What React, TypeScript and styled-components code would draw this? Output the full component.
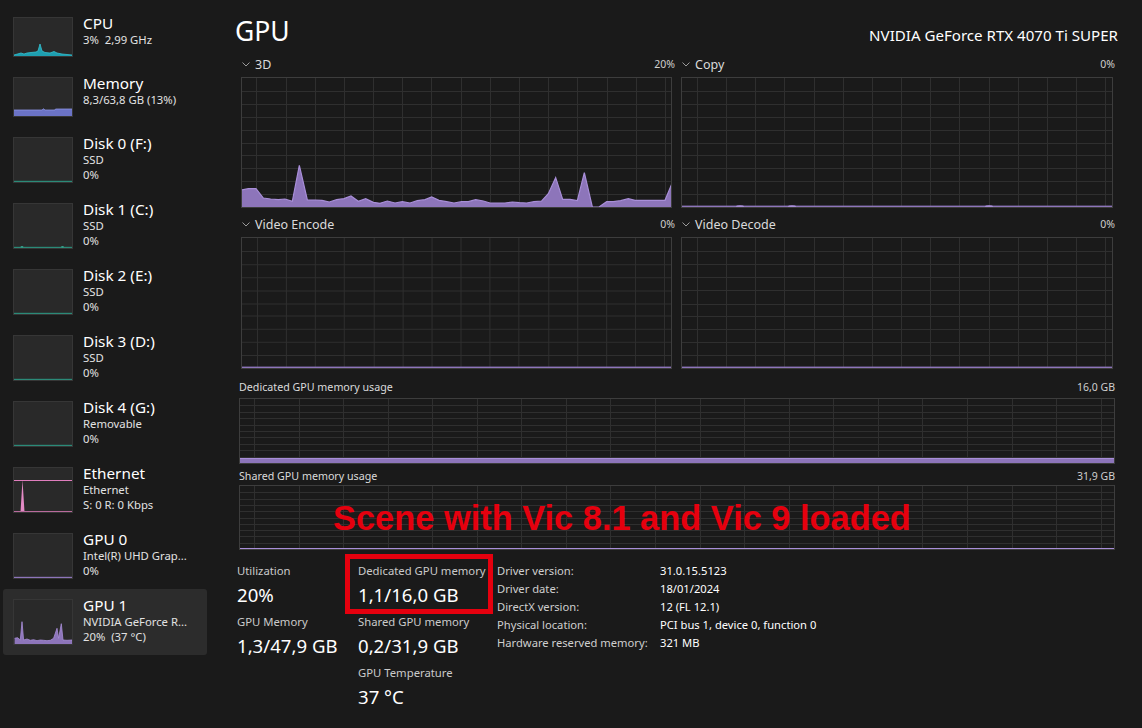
import React from 'react';
import styled, { createGlobalStyle } from 'styled-components';

const GlobalStyle = createGlobalStyle`
  html, body { margin: 0; padding: 0; background: #1a1a1a; }
  body {
    font-family: "Noto Sans", "Open Sans", sans-serif;
    color: #fff;
    -webkit-font-smoothing: antialiased;
  }
  #root { width: 1142px; height: 728px; overflow: hidden; }
`;

const PURPLE_FILL = '#8d75ba';
const PURPLE_LINE = '#a88ed8';
const GRID = '#2f2f2f';

const Page = styled.div`
  position: relative;
  display: flex;
  width: 1142px;
  height: 728px;
  background: #1a1a1a;
  overflow: hidden;
`;

/* ---------------- Sidebar ---------------- */

const Sidebar = styled.nav`
  flex: 0 0 210px;
  box-sizing: border-box;
  padding: 7px 3px 0 3px;
  display: flex;
  flex-direction: column;
`;

const Item = styled.div<{ $selected?: boolean }>`
  display: flex;
  gap: 10px;
  padding: 10px 0 10px 10px;
  background: ${(p) => (p.$selected ? '#2c2c2c' : 'transparent')};
  border-radius: 3px;
`;

const Thumb = styled.div<{ $h: number }>`
  flex: 0 0 60px;
  height: ${(p) => p.$h}px;
  box-sizing: border-box;
  background: #292929;
  border: 1px solid #363636;
  svg { display: block; width: 100%; height: 100%; }
`;

const ItemText = styled.div`
  display: flex;
  flex-direction: column;
  margin-top: -3px;
  min-width: 0;
`;

const ItemTitle = styled.div`
  font-size: 15.3px;
  line-height: 18px;
  color: #ffffff;
  white-space: nowrap;
`;

const ItemSub = styled.div`
  font-size: 11.3px;
  line-height: 15px;
  color: #e2e2e2;
  white-space: pre;
`;

/* ---------------- Main ---------------- */

const Main = styled.main`
  flex: 1;
  display: flex;
  flex-direction: column;
  padding: 0 25px 0 29px;
  min-width: 0;
`;

const Header = styled.header`
  box-sizing: border-box;
  height: 56px;
  padding-top: 14px;
  display: flex;
  justify-content: space-between;
  align-items: baseline;
`;

const Title = styled.h1`
  margin: 0 0 0 -4px;
  font-size: 26.5px;
  line-height: 34px;
  font-weight: 400;
  color: #fff;
`;

const Adapter = styled.div`
  font-size: 15.1px;
  color: #fff;
  margin-right: -1px;
`;

const ChartsGrid = styled.div`
  display: grid;
  grid-template-columns: 1fr 1fr;
  column-gap: 2px;
  row-gap: 8px;
`;

const ChartCell = styled.div`
  display: flex;
  flex-direction: column;
`;

const LabelRow = styled.div<{ $mb: number; $mt?: number; $pl?: number }>`
  display: flex;
  justify-content: space-between;
  align-items: center;
  height: 16px;
  margin-top: ${(p) => p.$mt ?? 0}px;
  margin-bottom: ${(p) => p.$mb}px;
  padding: 0 2px 0 ${(p) => p.$pl ?? 3}px;
`;

const LabelLeft = styled.div<{ $small?: boolean }>`
  display: flex;
  align-items: center;
  gap: 5px;
  font-size: ${(p) => (p.$small ? '10.7px' : '12.5px')};
  color: #dadada;
  white-space: nowrap;
`;

const LabelRight = styled.div`
  font-size: 10.5px;
  color: #cfcfcf;
`;

const ChartBox = styled.div<{ $h: number; $mr: number; $ml: number }>`
  height: ${(p) => p.$h}px;
  margin: 0 ${(p) => p.$mr}px 0 ${(p) => p.$ml}px;
  box-sizing: border-box;
  border: 1px solid #3d3d3d;
  svg { display: block; width: 100%; height: 100%; }
`;

const StatsArea = styled.div`
  margin-top: 12px;
  margin-left: -2px;
  display: flex;
`;

const StatCol = styled.div<{ $w: number }>`
  flex: 0 0 ${(p) => p.$w}px;
  display: flex;
  flex-direction: column;
  gap: 3px;
`;

const Stat = styled.div`
  display: flex;
  flex-direction: column;
`;

const StatLabel = styled.div`
  font-size: 11.3px;
  line-height: 18px;
  color: #cacaca;
  white-space: nowrap;
`;

const StatValue = styled.div`
  font-size: 18.6px;
  line-height: 30px;
  color: #fff;
  white-space: nowrap;
`;

const Details = styled.div`
  margin-top: -1px;
  display: grid;
  grid-template-columns: 163px auto;
  grid-auto-rows: 18px;
  align-items: center;
  font-size: 11.2px;
`;

const DetailKey = styled.div`
  color: #cfcfcf;
  white-space: nowrap;
`;

const DetailVal = styled.div`
  color: #fff;
  white-space: nowrap;
`;

/* ---------------- Overlays ---------------- */

const Caption = styled.div`
  position: absolute;
  left: 333px;
  top: 501px;
  font-family: "Liberation Sans", Arial, sans-serif;
  font-weight: 700;
  font-size: 34.4px;
  line-height: 34px;
  color: #e5000e;
  white-space: nowrap;
`;

const Highlight = styled.div`
  position: absolute;
  left: 345px;
  top: 554px;
  width: 148px;
  height: 60px;
  box-sizing: border-box;
  border: 5px solid #e5000e;
`;

/* ---------------- Drawings ---------------- */

const Chevron = () => (
  <svg width="8" height="5" viewBox="0 0 8 5">
    <polyline points="0.5,0.5 4,4 7.5,0.5" fill="none" stroke="#9a9a9a" strokeWidth="1" />
  </svg>
);

type GridProps = {
  w: number;
  h: number;
  colOffset: number;
  colStep: number;
  rows: number;
  children?: React.ReactNode;
};

const GridSvg = ({ w, h, colOffset, colStep, rows, children }: GridProps) => {
  const lines: React.ReactNode[] = [];
  for (let x = colOffset; x < w - 1; x += colStep) {
    const xx = Math.round(x) + 0.5;
    lines.push(<line key={'v' + x} x1={xx} y1={0} x2={xx} y2={h} stroke={GRID} strokeWidth={1} />);
  }
  for (let r = 1; r < rows; r++) {
    const yy = Math.round((h * r) / rows) + 0.5;
    lines.push(<line key={'h' + r} x1={0} y1={yy} x2={w} y2={yy} stroke={GRID} strokeWidth={1} />);
  }
  return (
    <svg viewBox={`0 0 ${w} ${h}`} preserveAspectRatio="none" shapeRendering="crispEdges">
      {lines}
      <g shapeRendering="auto">{children}</g>
    </svg>
  );
};

const area = (pts: number[][], h: number) => {
  const first = pts[0];
  const last = pts[pts.length - 1];
  return [`${first[0]},${h}`, ...pts.map((p) => `${p[0]},${p[1]}`), `${last[0]},${h}`].join(' ');
};
const line = (pts: number[][]) => pts.map((p) => `${p[0]},${p[1]}`).join(' ');

// 3D engine samples, read at 3x from the reference
const raw3D: number[][] = [
  [33, 270], [55, 266], [78, 266], [100, 294], [122, 297], [145, 299], [165, 297], [187, 304],
  [208, 196], [232, 300], [255, 300], [276, 301], [298, 306], [320, 299], [342, 296], [363, 288],
  [385, 304], [407, 296], [430, 307], [450, 310], [472, 303], [495, 309], [517, 305], [540, 309],
  [562, 302], [585, 299], [605, 291], [627, 301], [650, 305], [672, 309], [695, 305], [715, 305],
  [737, 299], [760, 303], [780, 309], [803, 309], [825, 309], [847, 306], [868, 308], [890, 309],
  [912, 305], [935, 303], [955, 281], [977, 233], [998, 298], [1020, 298], [1042, 302], [1063, 218],
  [1087, 322], [1107, 322], [1130, 305], [1150, 305], [1172, 302], [1195, 296], [1215, 301],
  [1240, 301], [1262, 301], [1285, 301], [1305, 301], [1326, 250],
];
const pts3D = raw3D.map(([X, Y]) => [230 + X / 3 - 242, Math.min(129, 100 + Y / 3 - 78)]);

const Chart3D = () => (
  <GridSvg w={429} h={129} colOffset={14.3} colStep={29.2} rows={10}>
    <polygon points={area(pts3D, 129)} fill={PURPLE_FILL} />
    <polyline points={line(pts3D)} fill="none" stroke={PURPLE_LINE} strokeWidth={1.2} />
  </GridSvg>
);

const ChartFlat = ({ bumps = [] as number[] }) => (
  <GridSvg w={430} h={129} colOffset={14.7} colStep={29.2} rows={10}>
    <rect x={0} y={127.6} width={430} height={1.4} fill={PURPLE_FILL} />
    {bumps.map((b) => (
      <ellipse key={b} cx={b} cy={128.4} rx={4} ry={1.2} fill={PURPLE_LINE} />
    ))}
  </GridSvg>
);

const MemChart = ({ fillH, h }: { fillH: number; h: number }) => (
  <GridSvg w={874} h={h} colOffset={14} colStep={44.56} rows={10}>
    <rect x={0} y={h - fillH} width={874} height={fillH} fill={PURPLE_FILL} />
    <rect x={0} y={h - fillH} width={874} height={1} fill={PURPLE_LINE} />
  </GridSvg>
);

type ThumbKind = 'cpu' | 'mem' | 'disk' | 'disk1' | 'eth' | 'gpu0' | 'gpu1';

const cpuPts = [
  [0, 37], [7, 35], [10, 36], [13, 35], [17, 34.5], [22, 34], [24, 33], [26, 26], [28, 33],
  [31, 34.5], [36, 35], [40, 33.5], [43, 35], [48, 36], [53, 36.5], [58, 37],
];
const gpu1Pts = [
  [0.6, 38.3], [3.6, 37.7], [6.3, 40], [8, 21.7], [9.6, 40], [13, 39], [16.3, 40.3], [19.6, 39.7],
  [23, 40.7], [26.3, 40], [29.6, 40.3], [33, 40.7], [36.3, 40.3], [39.6, 38.3], [43, 28.3],
  [44.6, 38.3], [47.3, 23.7], [49, 40], [53, 40.3], [58, 40],
];

const ThumbArt = ({ kind, h }: { kind: ThumbKind; h: number }) => {
  const ih = h - 2;
  let art: React.ReactNode = null;
  if (kind === 'cpu') {
    art = (
      <>
        <polygon points={area(cpuPts, ih)} fill="#1e9fb0" />
        <polyline points={line(cpuPts)} fill="none" stroke="#36c0cf" strokeWidth={0.8} />
      </>
    );
  } else if (kind === 'mem') {
    const m = [[0, 32], [28, 32], [29.5, 30.8], [31, 32], [41, 32], [41.5, 31], [58, 31]];
    art = (
      <>
        <polygon points={area(m, ih)} fill="#6b73c6" />
        <polyline points={line(m)} fill="none" stroke="#8e95e4" strokeWidth={0.8} />
      </>
    );
  } else if (kind === 'disk' || kind === 'disk1') {
    art = (
      <>
        <rect x={0} y={ih - 1.2} width={58} height={1.2} fill="#2b8a78" />
        {kind === 'disk1' && (
          <>
            <ellipse cx={8} cy={ih - 1.2} rx={1.4} ry={0.9} fill="#36a08c" />
            <ellipse cx={48.5} cy={ih - 1.2} rx={1.4} ry={0.9} fill="#36a08c" />
          </>
        )}
      </>
    );
  } else if (kind === 'eth') {
    art = (
      <>
        <rect x={0} y={12} width={58} height={1} fill="#e07dbd" />
        <polygon points={`6.5,${ih} 8.5,12 10.5,${ih}`} fill="#e48bc6" />
        <rect x={0} y={ih - 1} width={58} height={1} fill="#b86a9c" />
      </>
    );
  } else if (kind === 'gpu0') {
    art = <rect x={0} y={ih - 1.2} width={58} height={1.2} fill={PURPLE_FILL} />;
  } else if (kind === 'gpu1') {
    art = (
      <>
        <polygon points={area(gpu1Pts, ih)} fill={PURPLE_FILL} />
        <polyline points={line(gpu1Pts)} fill="none" stroke={PURPLE_LINE} strokeWidth={0.8} />
      </>
    );
  }
  return (
    <svg viewBox={`0 0 58 ${ih}`} preserveAspectRatio="none">
      {art}
    </svg>
  );
};

/* ---------------- Data ---------------- */

type SideItem = { title: string; lines: string[]; kind: ThumbKind; selected?: boolean };

const items: SideItem[] = [
  { title: 'CPU', lines: ['3%  2,99 GHz'], kind: 'cpu' },
  { title: 'Memory', lines: ['8,3/63,8 GB (13%)'], kind: 'mem' },
  { title: 'Disk 0 (F:)', lines: ['SSD', '0%'], kind: 'disk' },
  { title: 'Disk 1 (C:)', lines: ['SSD', '0%'], kind: 'disk1' },
  { title: 'Disk 2 (E:)', lines: ['SSD', '0%'], kind: 'disk' },
  { title: 'Disk 3 (D:)', lines: ['SSD', '0%'], kind: 'disk' },
  { title: 'Disk 4 (G:)', lines: ['Removable', '0%'], kind: 'disk' },
  { title: 'Ethernet', lines: ['Ethernet', 'S: 0 R: 0 Kbps'], kind: 'eth' },
  { title: 'GPU 0', lines: ['Intel(R) UHD Grap...', '0%'], kind: 'gpu0' },
  { title: 'GPU 1', lines: ['NVIDIA GeForce R...', '20%  (37 °C)'], kind: 'gpu1', selected: true },
];

const details: [string, string][] = [
  ['Driver version:', '31.0.15.5123'],
  ['Driver date:', '18/01/2024'],
  ['DirectX version:', '12 (FL 12.1)'],
  ['Physical location:', 'PCI bus 1, device 0, function 0'],
  ['Hardware reserved memory:', '321 MB'],
];

/* ---------------- App ---------------- */

export default function App() {
  return (
    <>
      <GlobalStyle />
      <Page>
        <Sidebar>
          {items.map((it) => {
            const h = it.lines.length === 1 ? 40 : 46;
            return (
              <Item key={it.title} $selected={it.selected}>
                <Thumb $h={h}>
                  <ThumbArt kind={it.kind} h={h} />
                </Thumb>
                <ItemText>
                  <ItemTitle>{it.title}</ItemTitle>
                  {it.lines.map((l) => (
                    <ItemSub key={l}>{l}</ItemSub>
                  ))}
                </ItemText>
              </Item>
            );
          })}
        </Sidebar>

        <Main>
          <Header>
            <Title>GPU</Title>
            <Adapter>NVIDIA GeForce RTX 4070 Ti SUPER</Adapter>
          </Header>

          <ChartsGrid>
            <ChartCell>
              <LabelRow $mb={5}>
                <LabelLeft><Chevron />3D</LabelLeft>
                <LabelRight>20%</LabelRight>
              </LabelRow>
              <ChartBox $h={131} $ml={2} $mr={5}>
                <Chart3D />
              </ChartBox>
            </ChartCell>
            <ChartCell>
              <LabelRow $mb={5}>
                <LabelLeft><Chevron />Copy</LabelLeft>
                <LabelRight>0%</LabelRight>
              </LabelRow>
              <ChartBox $h={131} $ml={2} $mr={4}>
                <ChartFlat bumps={[58, 110, 307]} />
              </ChartBox>
            </ChartCell>
            <ChartCell>
              <LabelRow $mb={5}>
                <LabelLeft><Chevron />Video Encode</LabelLeft>
                <LabelRight>0%</LabelRight>
              </LabelRow>
              <ChartBox $h={132} $ml={2} $mr={5}>
                <ChartFlat />
              </ChartBox>
            </ChartCell>
            <ChartCell>
              <LabelRow $mb={5}>
                <LabelLeft><Chevron />Video Decode</LabelLeft>
                <LabelRight>0%</LabelRight>
              </LabelRow>
              <ChartBox $h={132} $ml={2} $mr={4}>
                <ChartFlat />
              </ChartBox>
            </ChartCell>
          </ChartsGrid>

          <LabelRow $mt={10} $mb={3} $pl={0}>
            <LabelLeft $small>Dedicated GPU memory usage</LabelLeft>
            <LabelRight>16,0 GB</LabelRight>
          </LabelRow>
          <ChartBox $h={66} $ml={0} $mr={2}>
            <MemChart h={64} fillH={5} />
          </ChartBox>

          <LabelRow $mt={4} $mb={1} $pl={0}>
            <LabelLeft $small>Shared GPU memory usage</LabelLeft>
            <LabelRight>31,9 GB</LabelRight>
          </LabelRow>
          <ChartBox $h={65} $ml={0} $mr={2}>
            <MemChart h={63} fillH={1} />
          </ChartBox>

          <StatsArea>
            <StatCol $w={121}>
              <Stat>
                <StatLabel>Utilization</StatLabel>
                <StatValue>20%</StatValue>
              </Stat>
              <Stat>
                <StatLabel>GPU Memory</StatLabel>
                <StatValue>1,3/47,9 GB</StatValue>
              </Stat>
            </StatCol>
            <StatCol $w={139}>
              <Stat>
                <StatLabel>Dedicated GPU memory</StatLabel>
                <StatValue>1,1/16,0 GB</StatValue>
              </Stat>
              <Stat>
                <StatLabel>Shared GPU memory</StatLabel>
                <StatValue>0,2/31,9 GB</StatValue>
              </Stat>
              <Stat>
                <StatLabel>GPU Temperature</StatLabel>
                <StatValue>37 °C</StatValue>
              </Stat>
            </StatCol>
            <Details>
              {details.map(([k, v]) => (
                <React.Fragment key={k}>
                  <DetailKey>{k}</DetailKey>
                  <DetailVal>{v}</DetailVal>
                </React.Fragment>
              ))}
            </Details>
          </StatsArea>
        </Main>

        <Caption>Scene with Vic 8.1 and Vic 9 loaded</Caption>
        <Highlight />
      </Page>
    </>
  );
}
